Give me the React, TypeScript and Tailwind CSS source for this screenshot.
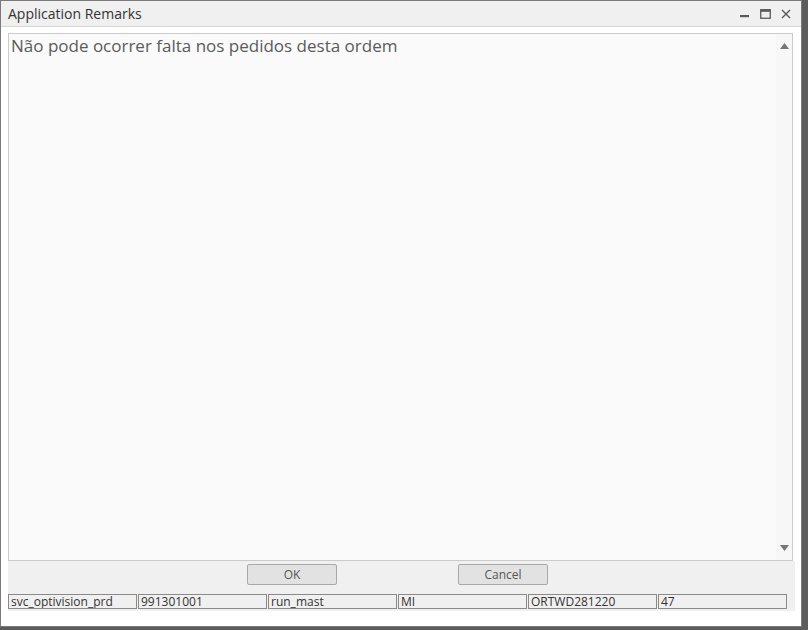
import React from "react";

const font = { fontFamily: '"Open Sans", "Noto Sans", "DejaVu Sans", sans-serif' };

function TitleIcons() {
  return (
    <div className="flex items-center gap-[10px] pr-[2px]">
      <svg width="10" height="10" viewBox="0 0 10 10">
        <rect x="0" y="6" width="9" height="2.2" fill="#5a5a5a" />
      </svg>
      <svg width="11" height="10" viewBox="0 0 11 10">
        <rect x="0.75" y="0.75" width="9.5" height="8.5" fill="none" stroke="#5a5a5a" strokeWidth="1.3" />
        <rect x="0.5" y="0.5" width="10" height="2.3" fill="#5a5a5a" />
      </svg>
      <svg width="10" height="10" viewBox="0 0 10 10">
        <path d="M1 1 L9 9 M9 1 L1 9" stroke="#5a5a5a" strokeWidth="1.4" />
      </svg>
    </div>
  );
}

export default function App() {
  const cells = ["svc_optivision_prd", "991301001", "run_mast", "MI", "ORTWD281220", "47"];
  return (
    <div className="w-[808px] h-[630px] bg-[#5c5c5c] overflow-hidden" style={font}>
      <div className="w-[802px] h-[627px] bg-white border border-[#7a7a7a] flex flex-col">
        <div className="h-[26px] bg-[#f0f0f0] border-b border-[#d6d6d6] flex items-center justify-between pl-[7px] pr-[8px] shrink-0">
          <span className="text-[14px] text-[#333]">Application Remarks</span>
          <TitleIcons />
        </div>
        <div className="pl-[7px] pr-[5px] pt-[6px]">
          <div className="w-[785px] h-[528px] border border-[#cbcbcb] bg-[#fafafa] flex">
            <div className="flex-1 pl-[2px] pt-[0px] text-[17px] leading-[24px] text-[#5a5a5a]">
              Não pode ocorrer falta nos pedidos desta ordem
            </div>
            <div className="w-[16px] bg-[#f7f7f7] flex flex-col justify-between items-center py-[9px]">
              <svg width="9" height="6" viewBox="0 0 9 6">
                <path d="M0 6 L4.5 0 L9 6 Z" fill="#777" />
              </svg>
              <svg width="9" height="6" viewBox="0 0 9 6">
                <path d="M0 0 L9 0 L4.5 6 Z" fill="#777" />
              </svg>
            </div>
          </div>
          <div className="w-[787px] h-[50px] bg-[#f0f0f0] flex flex-col">
            <div className="h-[33px] relative flex items-start pt-[3px]">
              <button className="ml-[239px] w-[90px] h-[21px] border border-[#a9a9a9] rounded-[2px] bg-[#e2e2e2] text-[12px] text-[#555] leading-none">
                OK
              </button>
              <button className="ml-[121px] w-[90px] h-[21px] border border-[#a9a9a9] rounded-[2px] bg-[#e2e2e2] text-[12px] text-[#555] leading-none">
                Cancel
              </button>
            </div>
            <div className="flex">
              {cells.map((c) => (
                <div
                  key={c}
                  className="w-[129px] h-[15px] mr-[1px] border border-[#8a8a8a] bg-[#f0f0f0] text-[12px] leading-[13px] text-[#333] pl-[2px] overflow-hidden whitespace-nowrap"
                >
                  {c}
                </div>
              ))}
            </div>
          </div>
        </div>
      </div>
    </div>
  );
}
